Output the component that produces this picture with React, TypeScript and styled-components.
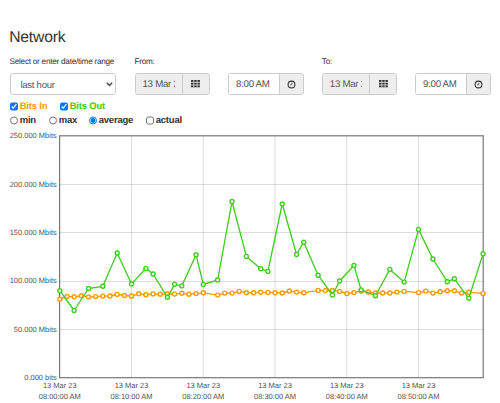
import React from "react";
import styled, { createGlobalStyle } from "styled-components";

const Global = createGlobalStyle`
  * { box-sizing: border-box; }
  body { margin: 0; background: #fff; color: #333; font-family: "Liberation Sans", Arial, sans-serif; overflow: hidden; text-rendering: geometricPrecision; }
`;

const Page = styled.main`
  width: 500px;
  height: 403px;
  padding-top: 27.5px;
  display: flex;
  flex-direction: column;
`;

const Title = styled.h1`
  margin: 0 0 0 9.2px;
  height: 20px;
  font-size: 15.7px;
  letter-spacing: -0.2px;
  line-height: 20px;
  font-weight: 400;
`;

const Filters = styled.div`
  display: grid;
  grid-template-columns: 106.5px 75px 79px 75px 75px;
  column-gap: 18.5px;
  margin: 8.5px 0 0 9.5px;
  height: 39px;
`;

const Field = styled.div<{ $shift?: number }>`
  display: flex;
  flex-direction: column;
  margin-left: ${(p) => p.$shift ?? 0}px;
`;

const Label = styled.label`
  height: 17px;
  line-height: 12px;
  font-size: 8.2px;
  letter-spacing: -0.25px;
  white-space: nowrap;
`;

const SelectBox = styled.div`
  height: 22px;
  display: flex;
  align-items: center;
  border: 1px solid #ccc;
  border-radius: 3px;
  padding-right: 2px;
`;

const Select = styled.select`
  appearance: none;
  flex: 1;
  min-width: 0;
  border: 0;
  outline: 0;
  padding: 0 0 0 10px;
  background: transparent;
  color: #555;
  font: 9.6px "Liberation Sans", Arial, sans-serif;
  letter-spacing: -0.3px;
`;

const Group = styled.div<{ $width: number }>`
  display: flex;
  width: ${(p) => p.$width}px;
  height: 22px;
  border: 1px solid #ccc;
  border-radius: 2.5px;
  overflow: hidden;
`;

const Value = styled.div<{ $disabled?: boolean }>`
  flex: 1;
  min-width: 0;
  padding: 1px 7px 0;
  background: ${(p) => (p.$disabled ? "#eee" : "#fff")};
  color: #555;
  font-size: 9.7px;
  letter-spacing: -0.28px;
  line-height: 20px;
`;

const Clip = styled.div`
  overflow: hidden;
  white-space: nowrap;
`;

const Addon = styled.button<{ $width: number }>`
  width: ${(p) => p.$width}px;
  padding: 0;
  border: 0;
  border-left: 1px solid #ccc;
  background: #eee;
  display: flex;
  align-items: center;
  justify-content: center;
`;

const Options = styled.div<{ $top: number }>`
  display: flex;
  align-items: center;
  height: 14px;
  margin: ${(p) => p.$top}px 0 0 9.5px;
`;

const Option = styled.label<{ $width: number; $color?: string }>`
  display: flex;
  align-items: center;
  gap: 1.7px;
  width: ${(p) => p.$width}px;
  padding-top: 2px;
  font-size: 9.5px;
  letter-spacing: -0.2px;
  font-weight: 700;
  line-height: 14px;
  white-space: nowrap;
  color: ${(p) => p.$color ?? "#333"};
`;

const Toggle = styled.input`
  width: 8.5px;
  height: 8.5px;
  flex: none;
  margin: 0 0 1.5px;
`;

const Chart = styled.svg`
  display: block;
  width: 500px;
  height: 275px;
  flex: none;
`;

const Tick = styled.text`
  font: 7.5px "Liberation Sans", Arial, sans-serif;
  fill: #545454;
`;

const GridIcon = () => (
  <svg width="9" height="8" viewBox="0 0 9 8" fill="#333">
    {[0, 2.7, 5.4].flatMap((y) =>
      [0, 3.2, 6.4].map((x) => <rect key={`${x}-${y}`} x={x} y={y} width="2.5" height="1.9" />)
    )}
  </svg>
);

const ClockIcon = () => (
  <svg width="9" height="9" viewBox="0 0 9 9" fill="none" stroke="#333">
    <circle cx="4.5" cy="4.5" r="3.4" strokeWidth="1.1" />
    <path d="M4.8 2.5V4.8H3" strokeWidth="0.7" />
  </svg>
);

const DateField = ({ label, shift }: { label: string; shift: number }) => (
  <Field $shift={shift}>
    <Label>{label}</Label>
    <Group $width={75}>
      <Value $disabled><Clip>13 Mar 2023</Clip></Value>
      <Addon $width={26.5}><GridIcon /></Addon>
    </Group>
  </Field>
);

const TimeField = ({ value, shift }: { value: string; shift: number }) => (
  <Field $shift={shift}>
    <Label />
    <Group $width={75.5}>
      <Value><Clip>{value}</Clip></Value>
      <Addon $width={24}><ClockIcon /></Addon>
    </Group>
  </Field>
);

type Point = [minute: number, y: number];

const bitsIn: Point[] = [
  [0, 299.2], [1, 296.5], [2, 296.7], [3, 295.8], [4, 297], [5, 296.6], [6, 296.1], [7, 296], [8, 294.4], [9, 295.5],
  [10, 296], [11, 293.8], [12, 294.8], [13, 293.9], [14, 294.3], [15, 293.8], [16, 294.1], [17, 293.3], [18, 294.3],
  [19, 293.6], [20, 292.8], [22, 295.1], [23, 293.1], [24, 293.1], [25, 291.4], [26, 292.7], [27, 292.7], [28, 292.3],
  [29, 292.4], [30, 292.7], [31, 293], [32, 291], [33, 292.1], [34, 292.8], [36, 290.4], [37, 290.6], [38, 290.5],
  [39, 291.4], [40, 293.5], [41, 292.6], [42, 291], [43, 292], [44, 293], [45, 293], [46, 293], [47, 292.1],
  [48, 291.4], [50, 292.6], [51, 291.1], [52, 293.1], [53, 291.8], [54, 290.7], [55, 290.8], [56, 293.1],
  [57, 292.3], [59, 293.4],
];

const bitsOut: Point[] = [
  [0, 290.7], [2, 310.5], [4, 288.5], [6, 286.3], [8, 253], [10, 284], [12, 268.4], [13, 274], [15, 297.3],
  [16, 284.3], [17, 285.9], [19, 254.8], [20, 284.5], [22, 280], [24, 201.5], [26, 256.4], [28, 268.8], [29, 271.4],
  [31, 204], [33, 254.5], [34, 242.2], [36, 275.2], [38, 295], [39, 281], [41, 265.5], [42, 290], [44, 295.7],
  [46, 269.4], [48, 282.1], [50, 229.4], [52, 259], [54, 281.7], [55, 278.8], [57, 298.3], [59, 253.8],
];

const xAt = (minute: number) => 59.8 + minute * 7.175;

const Series = ({ points, color }: { points: Point[]; color: string }) => (
  <g stroke={color}>
    <polyline points={points.map(([m, y]) => `${xAt(m)},${y}`).join(" ")} fill="none" strokeWidth="1.35" strokeLinejoin="round" />
    {points.map(([m, y]) => <circle key={m} cx={xAt(m)} cy={y} r="2" fill="#fff" strokeWidth="1.4" />)}
  </g>
);

const yLabels = ["250.000 Mbits", "200.000 Mbits", "150.000 Mbits", "100.000 Mbits", "50.000 Mbits", "0.000 bits"];

const App = () => (
  <>
    <Global />
    <Page>
      <Title>Network</Title>
      <Filters>
        <Field>
          <Label>Select or enter date/time range</Label>
          <SelectBox>
            <Select><option>last hour</option></Select>
            <svg width="7" height="5" viewBox="0 0 7 5"><path d="M.8.8 3.5 3.5 6.2.8" fill="none" stroke="#444" strokeWidth="1.4" /></svg>
          </SelectBox>
        </Field>
        <DateField label="From:" shift={0} />
        <TimeField value="8:00 AM" shift={0} />
        <DateField label="To:" shift={-3.7} />
        <TimeField value="9:00 AM" shift={-4} />
      </Filters>
      <Options $top={4}>
        <Option $width={50} $color="#ff9900"><Toggle type="checkbox" defaultChecked />Bits In</Option>
        <Option $width={60} $color="#44cc22"><Toggle type="checkbox" defaultChecked />Bits Out</Option>
      </Options>
      <Options $top={0}>
        <Option $width={39}><Toggle type="radio" name="mode" />min</Option>
        <Option $width={40}><Toggle type="radio" name="mode" />max</Option>
        <Option $width={57}><Toggle type="radio" name="mode" defaultChecked />average</Option>
        <Option $width={50}><Toggle type="checkbox" />actual</Option>
      </Options>
      <Chart viewBox="0 127 500 275">
        <g stroke="#545454" strokeOpacity="0.2" strokeWidth="1">
          {[184.5, 232.5, 281.5, 329.5].map((y) => <line key={y} x1="60" x2="483" y1={y} y2={y} />)}
          {[131.5, 203.3, 275, 346.8, 418.5].map((x) => <line key={x} x1={x} x2={x} y1="136" y2="377" />)}
        </g>
        <rect x="59.6" y="135.8" width="423.6" height="241.9" fill="none" stroke="#777" strokeWidth="1.2" />
        {yLabels.map((label, i) => (
          <Tick key={label} x="56.8" y={138.1 + i * 48.4} textAnchor="end">{label}</Tick>
        ))}
        {[0, 10, 20, 30, 40, 50].map((m) => (
          <g key={m} textAnchor="middle">
            <Tick x={xAt(m)} y="388.4">13 Mar 23</Tick>
            <Tick x={xAt(m)} y="399.3">{`08:${String(m).padStart(2, "0")}:00 AM`}</Tick>
          </g>
        ))}
        <Series points={bitsIn} color="#ff9900" />
        <Series points={bitsOut} color="#44cc22" />
      </Chart>
    </Page>
  </>
);

export default App;
